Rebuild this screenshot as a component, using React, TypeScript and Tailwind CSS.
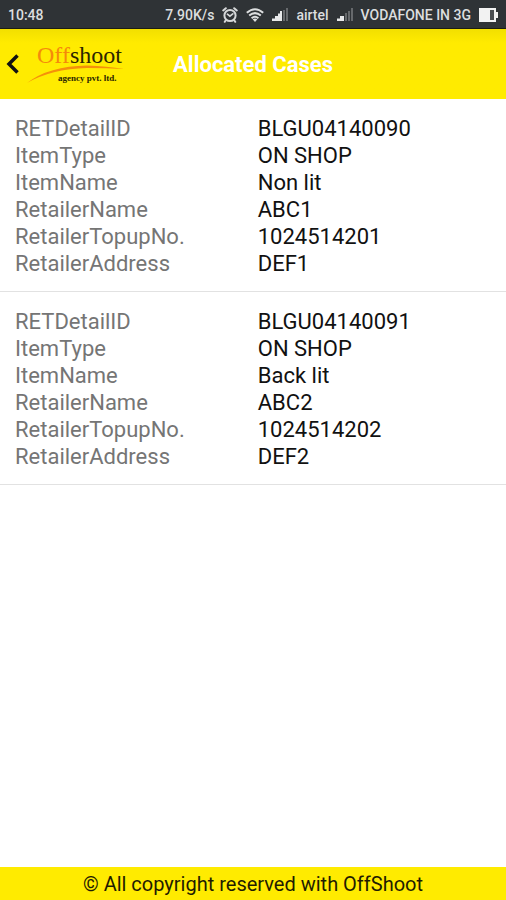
import React from "react";

interface RetailCase {
  RETDetailID: string;
  ItemType: string;
  ItemName: string;
  RetailerName: string;
  "RetailerTopupNo.": string;
  RetailerAddress: string;
}

const cases: RetailCase[] = [
  {
    RETDetailID: "BLGU04140090",
    ItemType: "ON SHOP",
    ItemName: "Non lit",
    RetailerName: "ABC1",
    "RetailerTopupNo.": "1024514201",
    RetailerAddress: "DEF1",
  },
  {
    RETDetailID: "BLGU04140091",
    ItemType: "ON SHOP",
    ItemName: "Back lit",
    RetailerName: "ABC2",
    "RetailerTopupNo.": "1024514202",
    RetailerAddress: "DEF2",
  },
];

const AlarmIcon = () => (
  <svg width="16" height="16" viewBox="0 0 16 16" fill="none" stroke="#d6d8d9" strokeWidth="2" strokeLinecap="round">
    <circle cx="8" cy="8.5" r="5.6" />
    <path d="M1.2 3.4 3.8 1.2M14.8 3.4 12.2 1.2M3.8 13.2 2.8 14.8M12.2 13.2l1 1.6" />
    <path d="M5.4 7.2 7.9 9.2 10.8 6.8" strokeWidth="1.7" />
  </svg>
);

const WifiIcon = () => (
  <svg width="18" height="14" viewBox="0 0 18 14" fill="none" stroke="#dcdedf" strokeWidth="2">
    <path d="M.8 4.8Q9-2.4 17.2 4.8" />
    <path d="M3.2 7.6Q9 2.6 14.8 7.6" />
    <path d="M5.6 10.2Q9 7.2 12.4 10.2" />
    <path d="M6.6 11.3Q9 9.5 11.4 11.3L9 14Z" fill="#dcdedf" stroke="none" />
  </svg>
);

const StrongSignalIcon = () => (
  <svg width="16" height="13" viewBox="0 0 16 13">
    <path d="M0 13V10.5H3V8H6V5.5H8V3H10V13Z" fill="#e8e9ea" />
    <path d="M11 2H13V13H11ZM14 0H16V13H14Z" fill="#66696c" />
  </svg>
);

const WeakSignalIcon = () => (
  <svg width="16" height="13" viewBox="0 0 16 13">
    <path d="M0 13V10.5H3V8H7V13Z" fill="#e8e9ea" />
    <path d="M8 5H10V13H8ZM11 3H13V13H11ZM14 0H16V13H14Z" fill="#66696c" />
  </svg>
);

const BatteryIcon = () => (
  <svg width="19" height="14" viewBox="0 0 19 14">
    <path d="M0 0H17V4H19V10H17V14H0Z" fill="#f2f2f2" />
    <path d="M11 2H15V12H11Z" fill="#4a4d50" />
  </svg>
);

const Logo = () => (
  <svg width="98" height="46" viewBox="0 0 98 46" role="img" aria-label="Offshoot agency pvt. ltd.">
    <text x="10" y="22" fontSize="24" fontFamily="'Liberation Serif', serif" fill="#2b2500">
      <tspan fill="#f58a0b">Off</tspan>shoot
    </text>
    <path d="M0 42Q22 25 60 24.5Q80 25 97 28Q80 27 60 27Q24 28 0 42Z" fill="#f5900a" />
    <text x="31" y="40" fontSize="9" fontWeight="bold" fontFamily="'Liberation Serif', serif" fill="#2b2500">
      agency pvt. ltd.
    </text>
  </svg>
);

const StatusBar = () => (
  <div className="flex h-7 items-center bg-[#2f3336] px-2 pt-px text-sm font-medium text-[#dcdedf]">
    <span>10:48</span>
    <div className="ml-auto flex items-center gap-2">
      <span>7.90K/s</span>
      <AlarmIcon />
      <WifiIcon />
      <StrongSignalIcon />
      <span>airtel</span>
      <WeakSignalIcon />
      <span>VODAFONE IN 3G</span>
      <BatteryIcon />
    </div>
  </div>
);

const CaseItem = ({ item }: { item: RetailCase }) => (
  <li className="border-b border-[#e2e2e2] px-[15px] pt-4 pb-3.5">
    <dl className="text-[22px] leading-[27px]">
      {Object.entries(item).map(([label, value]) => (
        <div key={label} className="grid grid-cols-[51fr_49fr]">
          <dt className="text-[#757575]">{label}</dt>
          <dd className="text-[#111111]">{value}</dd>
        </div>
      ))}
    </dl>
  </li>
);

const App: React.FC = () => {
  return (
    <div className="flex min-h-screen flex-col bg-white font-[Roboto,sans-serif]">
      <StatusBar />
      <header className="grid h-[71px] grid-cols-[1fr_auto_1fr] items-center border-t border-[#1c1d12] bg-linear-to-b from-[#f2df00] to-[#ffeb00] to-20% px-1.5">
        <div className="flex items-center gap-2">
          <button type="button" aria-label="Back">
            <svg width="13" height="20" viewBox="0 0 13 20" fill="none" stroke="#111" strokeWidth="3.5">
              <path d="M11.5 1.5 3 10l8.5 8.5" />
            </svg>
          </button>
          <Logo />
        </div>
        <h1 className="text-[22px] font-bold text-white">Allocated Cases</h1>
      </header>
      <main className="flex-1">
        <ul>
          {cases.map((item) => (
            <CaseItem key={item.RETDetailID} item={item} />
          ))}
        </ul>
      </main>
      <footer className="bg-[#ffeb00] pt-[5px] pb-[3px] text-center text-xl leading-[25px] text-[#1f1c00]">
        © All copyright reserved with OffShoot
      </footer>
    </div>
  );
};

export default App;
